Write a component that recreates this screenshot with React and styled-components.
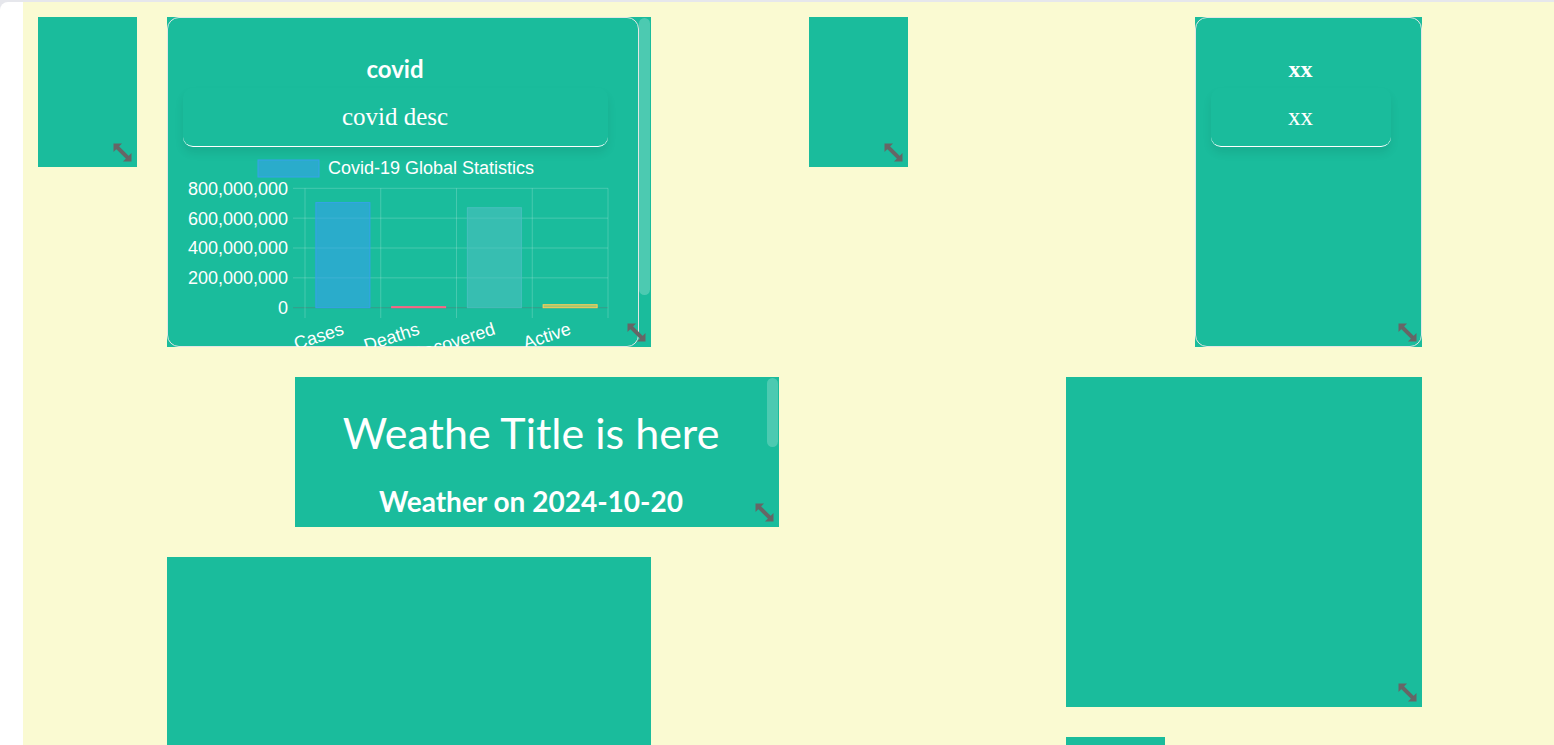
import React from 'react';
import styled, { createGlobalStyle } from 'styled-components';

const GlobalStyle = createGlobalStyle`
  html, body { margin: 0; padding: 0; }
  body { background: #e6e7ec; font-family: Lato, "Noto Sans", sans-serif; }
`;

const Shell = styled.div`
  display: flex;
  height: 100vh;
  box-sizing: border-box;
  padding-top: 2px;
  background: #e6e7ec;
  overflow: hidden;
`;

const Sidebar = styled.aside`
  width: 23px;
  flex: none;
  background: #ffffff;
  border-top-left-radius: 8px;
`;

const Main = styled.main`
  flex: 1;
  background: #fafad2;
  overflow: hidden;
`;

const Board = styled.div`
  display: grid;
  grid-template-columns: repeat(11, 98.5px);
  grid-auto-rows: 150px;
  gap: 30px;
  padding: 15px;
`;

const Tile = styled.div`
  grid-column: ${(p) => p.$col + 1} / span ${(p) => p.$w};
  grid-row: ${(p) => p.$row + 1} / span ${(p) => p.$h};
  position: relative;
  background: #1abc9c;
  color: #ffffff;
  min-width: 0;
  min-height: 0;
`;

/* Scroll area with a 12px gutter for the (custom-drawn) scrollbar */
const Scroller = styled.div`
  height: 100%;
  box-sizing: border-box;
  padding-right: 12px;
  overflow-y: auto;
  overflow-x: hidden;
  scrollbar-width: none;
  &::-webkit-scrollbar { display: none; }
`;

const ScrollThumb = styled.div`
  position: absolute;
  top: 1px;
  right: 1px;
  width: 11px;
  height: ${(p) => p.$length}px;
  border-radius: 6px;
  background: rgba(255, 255, 255, 0.22);
  pointer-events: none;
`;

const Card = styled.div`
  height: 100%;
  box-sizing: border-box;
  border: 1px solid #e3e6e4;
  border-radius: 12px;
  padding: 0 30px 0 15px;
`;

const CardTitle = styled.h3`
  margin: 0;
  padding-top: 37px;
  line-height: 28px;
  text-align: center;
  font-weight: 700;
  font-size: 24px;
  font-family: ${(p) =>
    p.$serif ? '"Liberation Serif", "Times New Roman", serif' : 'Lato, "Noto Sans", sans-serif'};
`;

const Desc = styled.div`
  margin-top: 5px;
  padding: 15px 0;
  line-height: 28px;
  text-align: center;
  font-family: "Liberation Serif", "Times New Roman", serif;
  font-size: 25px;
  border-bottom: 1px solid #ffffff;
  border-radius: 10px;
  box-shadow: 0 6px 10px rgba(0, 0, 0, 0.08);
`;

const ChartSvg = styled.svg`
  display: block;
  margin-top: 5px;
  width: 426px;
  height: 256px;
  overflow: visible;
  font-family: "Liberation Sans", Arial, sans-serif;
`;

const WeatherBody = styled.div`
  padding-top: 31px;
  text-align: center;
`;

const WeatherTitle = styled.h1`
  margin: 0;
  font-family: Lato, "Noto Sans", sans-serif;
  font-weight: 400;
  font-size: 43px;
  line-height: 50px;
`;

const WeatherDate = styled.h2`
  margin: 26px 0 0;
  font-family: Lato, "Noto Sans", sans-serif;
  font-weight: 700;
  font-size: 28px;
  line-height: 34px;
`;

const WeatherDetails = styled.div`
  height: 180px;
`;

const HandleBox = styled.span`
  position: absolute;
  right: 5px;
  bottom: 5px;
  width: 19px;
  height: 19px;
  line-height: 0;
  z-index: 2;
`;

function ResizeHandle() {
  return (
    <HandleBox>
      <svg width="19" height="19" viewBox="0 0 20 20">
        <line x1="4" y1="4" x2="16" y2="16" stroke="#666" strokeWidth="4.2" />
        <polygon points="0.5,0.5 9.5,0.5 0.5,9.5" fill="#666" />
        <polygon points="19.5,19.5 10.5,19.5 19.5,10.5" fill="#666" />
      </svg>
    </HandleBox>
  );
}

const chartData = [
  { label: 'Cases', value: 704e6, fill: 'rgba(54,162,235,0.6)', stroke: 'rgba(54,162,235,1)' },
  { label: 'Deaths', value: 7e6, fill: 'rgba(255,99,132,0.6)', stroke: 'rgba(255,99,132,1)' },
  { label: 'Recovered', value: 670e6, fill: 'rgba(75,192,192,0.6)', stroke: 'rgba(75,192,192,0.9)' },
  { label: 'Active', value: 20e6, fill: 'rgba(255,206,86,0.6)', stroke: 'rgba(255,206,86,1)' },
];

function CovidChart() {
  const axisX = 122;
  const step = 75.75;
  const top = 36.3;
  const zero = 155.7;
  const scale = (zero - top) / 800e6;
  const ticks = [800e6, 600e6, 400e6, 200e6, 0];
  const grid = 'rgba(255,255,255,0.2)';
  return (
    <ChartSvg viewBox="0 0 426 256">
      <rect x="75" y="8" width="61" height="17" fill="rgba(54,162,235,0.6)" stroke="rgba(54,162,235,1)" />
      <text x="145" y="21.8" fontSize="18" fill="#fff">Covid-19 Global Statistics</text>
      {ticks.map((t) => {
        const y = zero - t * scale;
        return (
          <g key={t}>
            <line x1="110" x2="425" y1={y} y2={y} stroke={t === 0 ? 'rgba(90,120,115,0.45)' : grid} strokeWidth="1" />
            <text x="105" y={y + 6.4} fontSize="18" fill="#fff" textAnchor="end">
              {t.toLocaleString('en-US')}
            </text>
          </g>
        );
      })}
      {[0, 1, 2, 3, 4].map((i) => (
        <line key={i} x1={axisX + i * step} x2={axisX + i * step} y1={top} y2="166" stroke={grid} strokeWidth="1" />
      ))}
      {chartData.map((d, i) => {
        const cx = axisX + step * (i + 0.5);
        const h = Math.max(d.value * scale, 1);
        return (
          <g key={d.label}>
            <rect x={cx - 27} y={zero - h} width="54" height={h} fill={d.fill} stroke={d.stroke} strokeWidth="1" />
            <text
              x={cx + 2}
              y="182"
              fontSize="18"
              fill="#fff"
              textAnchor="end"
              transform={`rotate(-18 ${cx + 2} 182)`}
            >
              {d.label}
            </text>
          </g>
        );
      })}
    </ChartSvg>
  );
}

export default function App() {
  return (
    <>
      <GlobalStyle />
      <Shell>
        <Sidebar />
        <Main>
          <Board>
            <Tile $col={0} $row={0} $w={1} $h={1}>
              <ResizeHandle />
            </Tile>
            <Tile $col={1} $row={0} $w={4} $h={2}>
              <Scroller>
                <Card>
                  <CardTitle>covid</CardTitle>
                  <Desc>covid desc</Desc>
                  <CovidChart />
                </Card>
              </Scroller>
              <ScrollThumb $length={277} />
              <ResizeHandle />
            </Tile>
            <Tile $col={6} $row={0} $w={1} $h={1}>
              <ResizeHandle />
            </Tile>
            <Tile $col={9} $row={0} $w={2} $h={2}>
              <Card>
                <CardTitle $serif>xx</CardTitle>
                <Desc>xx</Desc>
              </Card>
              <ResizeHandle />
            </Tile>
            <Tile $col={2} $row={2} $w={4} $h={1}>
              <Scroller>
                <WeatherBody>
                  <WeatherTitle>Weathe Title is here</WeatherTitle>
                  <WeatherDate>Weather on 2024-10-20</WeatherDate>
                  <WeatherDetails />
                </WeatherBody>
              </Scroller>
              <ScrollThumb $length={69} />
              <ResizeHandle />
            </Tile>
            <Tile $col={8} $row={2} $w={3} $h={2}>
              <ResizeHandle />
            </Tile>
            <Tile $col={1} $row={3} $w={4} $h={2}>
              <ResizeHandle />
            </Tile>
            <Tile $col={8} $row={4} $w={1} $h={1}>
              <ResizeHandle />
            </Tile>
          </Board>
        </Main>
      </Shell>
    </>
  );
}
